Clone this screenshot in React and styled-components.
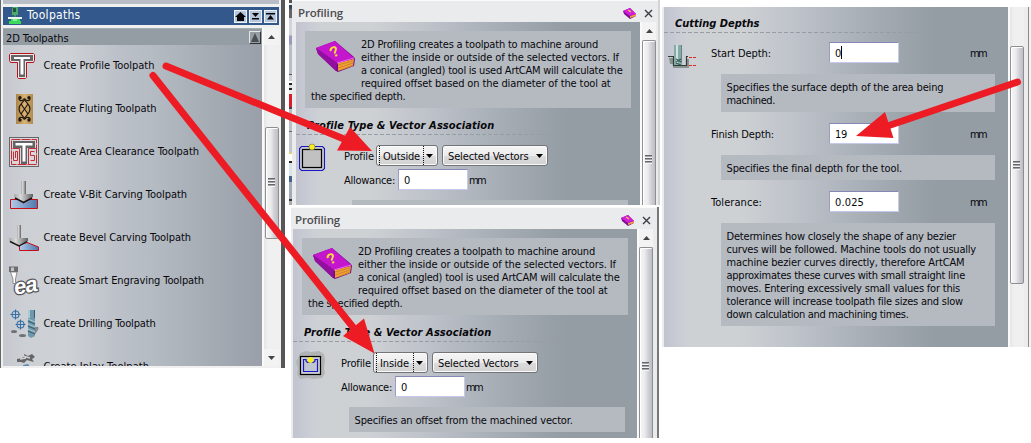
import React, { useLayoutEffect, useRef, useState } from "react";
import styled, { createGlobalStyle } from "styled-components";

const GlobalStyle = createGlobalStyle`
  * { box-sizing: border-box; }
  body {
    margin: 0;
    background: #fff;
    overflow: hidden;
    color: #08080c;
    font: 11px/13px "DejaVu Sans Condensed", "DejaVu Sans", sans-serif;
    font-stretch: condensed;
  }
  svg { display: block; flex: none; }
`;

/* ---------- text ---------- */

const FitSpan = styled.span`
  display: block;
  width: max-content;
  white-space: pre;
`;

/* One line of text whose tracking is adjusted to a given advance width. */
function Line({ w, children }) {
  const ref = useRef(null);
  const [spacing, setSpacing] = useState(0);
  useLayoutEffect(() => {
    const natural = ref.current.getBoundingClientRect().width;
    setSpacing((w - natural) / children.length);
  }, [w, children]);
  return (
    <FitSpan ref={ref} style={{ letterSpacing: spacing }}>
      {children}
    </FitSpan>
  );
}

/* ---------- shell ---------- */

const Page = styled.main`
  position: relative;
  display: flex;
  align-items: flex-start;
  width: 1031px;
  height: 443px;
  background: #fff;
  overflow: hidden;
`;

const Arrows = styled.svg`
  position: absolute;
  inset: 0;
  pointer-events: none;
`;

/* ---------- scrollbar ---------- */

const Track = styled.div`
  display: flex;
  flex-direction: column;
  align-items: center;
  flex: none;
  width: ${(p) => p.$width || 16}px;
  border-left: 2px solid #fafafa;
  background: linear-gradient(90deg, #e6e6e6, #f0f0f0 30%, #efefef);
`;

const ArrowCell = styled.div`
  display: flex;
  justify-content: center;
  align-items: center;
  height: ${(p) => p.$h}px;
  width: 100%;
  background: #f3f3f3;
`;

const TrackGap = styled.div`
  height: ${(p) => p.$h}px;
`;

const Thumb = styled.div`
  width: 14px;
  height: ${(p) => p.$h}px;
  padding-top: ${(p) => p.$grip}px;
  border: 1px solid #8f8f93;
  border-bottom-width: ${(p) => (p.$open ? 0 : 1)}px;
  border-radius: ${(p) => (p.$open ? "2px 2px 0 0" : "2px")};
  background: linear-gradient(90deg, #f6f6f6, #ebebed 40%, #cfcfd5 70%, #bdbdc4);
  box-shadow: inset 1px 1px 0 #fff;
`;

const Grip = styled.div`
  width: 7px;
  height: 9px;
  margin-left: 2px;
  background: repeating-linear-gradient(#66676b 0 1px, #a5a5aa 1px 2px, #f4f4f4 2px 3px);
`;

function Triangle({ down }) {
  return (
    <svg width="7" height="4" viewBox="0 0 7 4">
      <path d={down ? "M0 0H7L3.5 4Z" : "M0 4H7L3.5 0Z"} fill="#444" />
    </svg>
  );
}

/* ---------- toolpaths window ---------- */

const ToolWindow = styled.section`
  display: flex;
  width: 285px;
  height: 368px;
  border-left: 1px solid #66676b;
  border-right: 4px solid #575757;
  background: #f0f0f0;
  padding: 0 2px;
`;

const ToolColumn = styled.div`
  display: flex;
  flex-direction: column;
  width: 276px;
`;

const TopStrip = styled.div`
  height: 4px;
  margin-bottom: 3px;
  background: #b9bec6;
`;

const ToolTitle = styled.header`
  display: flex;
  align-items: center;
  height: 18px;
  padding: 0 2px 1px 5px;
  margin-bottom: 3px;
  background: #33588b;
  color: #fff;
  font-size: 12px;
`;

const TitleText = styled.div`
  flex: 1;
  padding-left: 5px;
`;

const TitleButton = styled.span`
  display: flex;
  align-items: center;
  justify-content: center;
  width: 13px;
  height: 13px;
  margin: 1px 0 0 2px;
  border: 1px solid #eef2f6;
  background: #b7c6da;
`;

const ToolBody = styled.div`
  display: flex;
  height: 338px;
`;

const ToolList = styled.div`
  width: 259px;
  overflow: hidden;
  background: linear-gradient(90deg, #c5c9d0, #cccfd3 20px, #ced1d5 65px, #bcc1c9 115px, #b5bbc3 150px, #a5acb4 205px, #9a9fa9 259px);
`;

const SectionHeader = styled.div`
  display: flex;
  align-items: center;
  justify-content: space-between;
  height: 17px;
  padding: 3px 1px 0 3px;
  border-top: 1px solid #a6acb3;
  background: #949ca4;
`;

const CollapseButton = styled.span`
  display: flex;
  align-items: center;
  justify-content: center;
  width: 12px;
  height: 13px;
  margin-top: -2px;
  border: 1px solid #e4e7ea;
  border-right-color: #333;
  border-bottom-color: #333;
  background: #959da5;
`;

const ToolItem = styled.div`
  display: flex;
  align-items: flex-start;
  gap: 4px;
  height: 43px;
  padding: 6px 0 0 6px;
`;

const ToolLabel = styled.div`
  padding: 8px 0 0 0.5px;
`;

function MachineIcon() {
  return (
    <svg width="14" height="17" viewBox="0 0 14 17">
      <path d="M5 0h5v8H8l-1 3L6 8H4V2Z" fill="#49aa69" />
      <path d="M5 1h3v4H5Z" fill="#25533d" />
      <path d="M0 10h14v2H0Z" fill="#e8f4ec" />
      <path d="M3 12h9v2h1v3H1v-3h2Z" fill="#39d95a" />
      <path d="M5 12h4v2H5Z" fill="#8cf0a0" />
    </svg>
  );
}

function ProfileToolIcon() {
  return (
    <svg width="30" height="30" viewBox="0 0 30 30">
      <path d="M1.5 2.5H24.5L25.5 3.5V9.5L24.5 11.5H17.5V26.5L16.5 27.500H9.5L8.5 26.500V11.5H1.5L.5 9.5V3.5Z" fill="#efe6e8" stroke="#b81219" />
      <path d="M2 4H24V10H16V26H10V10H2Z" fill="#646469" />
      <path d="M5 6H21V8H14.500V23.500H11.500V8H5Z" fill="#fff" />
    </svg>
  );
}

function FlutingIcon() {
  return (
    <svg width="30" height="30" viewBox="0 0 30 30">
      <defs>
        <linearGradient id="wood" x1="0" x2="1">
          <stop offset="0" stopColor="#a98349" />
          <stop offset=".5" stopColor="#d9b274" />
          <stop offset="1" stopColor="#b08a4d" />
        </linearGradient>
      </defs>
      <rect x="7" width="17" height="30" fill="url(#wood)" />
      <g fill="none" stroke="#20190f" strokeWidth="1.2">
        <path d="M11 4c-3 2 2 4 4 1 2 4 6 5 6 10s-4 6-6 10c-2-3-7-1-4 1" />
        <path d="M20 4c3 2-2 4-4 1-2 4-6 5-6 10s4 6 6 10c2-3 7-1 4 1" />
        <path d="m12 10 7 10M19 10l-7 10" />
      </g>
      <g fill="#20190f">
        <circle cx="11" cy="3.8" r="1.7" />
        <circle cx="20" cy="3.8" r="1.7" />
        <circle cx="11" cy="26" r="1.7" />
        <circle cx="20" cy="26" r="1.7" />
      </g>
    </svg>
  );
}

function AreaIcon() {
  return (
    <svg width="30" height="30" viewBox="0 0 30 30">
      <rect x=".5" y=".5" width="29" height="29" fill="#d9d7d9" stroke="#65656a" />
      <g fill="none" stroke="#c01a22" strokeWidth=".9">
        <rect x="2.5" y="2.5" width="25" height="25" strokeDasharray="9 1" />
        <path d="M10.500 11.500H3.500M10.500 11.500V27M19.500 11.500H27M19.500 11.500V27" />
        <path d="M4.500 14.500V23.500H8.500V14.500H6.500V21M25.500 14.500H21.500V18.500H25.500V23.500H21.500" />
      </g>
      <path d="M4 4H26V11H18V27H12V11H4Z" fill="#646469" />
      <path d="M6.500 6H23.500V8.500H16.500V24.500H13.500V8.500H6.500Z" fill="#fff" />
    </svg>
  );
}

function BlueDefs({ id }) {
  return (
    <defs>
      <linearGradient id={id} x1="0" y1="0" x2="1" y2="0">
        <stop offset="0" stopColor="#b4cbe8" />
        <stop offset="1" stopColor="#4c77ab" />
      </linearGradient>
      <linearGradient id={id + "s"} x1="0" x2="1">
        <stop offset="0" stopColor="#a9a9aa" />
        <stop offset=".35" stopColor="#d8d8d8" />
        <stop offset="1" stopColor="#606063" />
      </linearGradient>
    </defs>
  );
}

function VBitIcon() {
  return (
    <svg width="30" height="30" viewBox="0 0 30 30">
      <BlueDefs id="vb" />
      <path d="M1.500 19.500H9L14.500 23L20 19.500H28.500V28.500H1.500Z" fill="url(#vb)" stroke="#c50e18" />
      <rect x="12" y="1" width="5" height="13" fill="url(#vbs)" />
      <path d="M5 14H24V17L14.500 22.500L5 17Z" fill="url(#vbs)" />
      <path d="M6 18 14.500 22.500 23 18" fill="none" stroke="#161616" strokeWidth="1.500" />
    </svg>
  );
}

function BevelIcon() {
  return (
    <svg width="30" height="30" viewBox="0 0 30 30">
      <BlueDefs id="bv" />
      <path d="M10.500 22 18 19.500 29.500 24V27.500H10.500Z" fill="url(#bv)" stroke="#c50e18" />
      <rect x="8" y="2" width="4" height="13" fill="url(#bvs)" />
      <path d="M0 15H19V18L10 23L0 18Z" fill="url(#bvs)" />
      <path d="M1 18.500 10 23 18 18.500" fill="none" stroke="#161616" strokeWidth="1.400" />
    </svg>
  );
}

const IconGlyphs = styled.text`
  font: italic bold 22px "Liberation Sans", sans-serif;
  paint-order: stroke;
  fill: #fff;
  stroke: #55555a;
  stroke-width: 2.5px;
  letter-spacing: -1px;
`;

function EngravingIcon() {
  return (
    <svg width="30" height="30" viewBox="0 0 30 30" overflow="visible">
      <IconGlyphs x="5" y="27" transform="rotate(-10 15 20)">ea</IconGlyphs>
      <path d="M0 .5H9V6H0Z" fill="#6d6d70" />
      <path d="M1.500 6H8L6.500 13V17.500H4V13Z" fill="#fff" stroke="#77777a" strokeWidth=".8" />
      <path d="M2 1.500H5V5H2Z" fill="#c5c5c7" />
    </svg>
  );
}

function DrillingIcon() {
  return (
    <svg width="30" height="30" viewBox="0 0 30 30">
      <path d="M26 18q5-1 3 3l-5 7h-3Z" fill="#85888c" />
      <g fill="none" stroke="#3570a8" strokeWidth="1.100">
        <circle cx="6.500" cy="5.500" r="3.500" />
        <path d="M1.500 5.500H11.500M6.500 .5V10.500" />
        <circle cx="11.500" cy="15.500" r="3.500" />
        <path d="M6.500 15.500H16.500M11.500 10.500V20.500" />
      </g>
      <ellipse cx="5" cy="22.500" rx="3" ry="1.500" fill="#707174" />
      <ellipse cx="13.500" cy="26.500" rx="3.500" ry="1.500" fill="#707174" />
      <path d="M19 1H26V27L22 29L19 27Z" fill="#6e99ac" />
      <path d="M19 1H21V9H19Z" fill="#a9cbd6" />
      <path d="M25 1H26V9H25Z" fill="#375b6e" />
      <path d="m19 12 7 3M19 17l7 3M19 22l7 3" stroke="#3d6070" strokeWidth="1.300" />
      <path d="m19 10 7 3M19 15l7 3M19 20l7 3" stroke="#a5c8d2" />
    </svg>
  );
}

function InlayIcon() {
  return (
    <svg width="30" height="30" viewBox="0 0 30 30">
      <path d="m15 2 4 2 4-2 3 3-3 2 2 3-4-1-3-1-3 3-3-1-4 0 0-3 5-1 2-2Z" fill="#646568" />
      <path d="m14 4 7 2M11 7l6-1" stroke="#d1d2d4" strokeWidth="1.500" />
      <path d="m14 13 5-1 2 3-6 2Z" fill="#5f86b4" />
    </svg>
  );
}

const tools = [
  ["Create Profile Toolpath", 111, ProfileToolIcon],
  ["Create Fluting Toolpath", 113, FlutingIcon],
  ["Create Area Clearance Toolpath", 155.5, AreaIcon],
  ["Create V-Bit Carving Toolpath", 143.5, VBitIcon],
  ["Create Bevel Carving Toolpath", 147.5, BevelIcon],
  ["Create Smart Engraving Toolpath", 160.5, EngravingIcon],
  ["Create Drilling Toolpath", 112, DrillingIcon],
  ["Create Inlay Toolpath", 105.5, InlayIcon],
];

function Toolpaths() {
  return (
    <ToolWindow>
      <ToolColumn>
        <TopStrip />
        <ToolTitle>
          <MachineIcon />
          <TitleText><Line w={53.5}>Toolpaths</Line></TitleText>
          <TitleButton>
            <svg width="11" height="9" viewBox="0 0 11 9"><path d="M5.500 0 11 5H9V9H2V5H0Z" fill="#05070a" /></svg>
          </TitleButton>
          <TitleButton>
            <svg width="9" height="7" viewBox="0 0 9 7"><path d="M1 0H8L4.500 4ZM1 5H8V6.500H1Z" fill="#05070a" /></svg>
          </TitleButton>
          <TitleButton>
            <svg width="9" height="7" viewBox="0 0 9 7"><path d="M0 0H9V1.500H0ZM1 6.500H8L4.500 2Z" fill="#05070a" /></svg>
          </TitleButton>
        </ToolTitle>
        <ToolBody>
          <ToolList>
            <SectionHeader>
              <Line w={62.5}>2D Toolpaths</Line>
              <CollapseButton>
                <svg width="8" height="9" viewBox="0 0 8 9"><path d="M4 0 8 9H0Z" fill="#4b4e52" /></svg>
              </CollapseButton>
            </SectionHeader>
            {tools.map(([label, w, Icon]) => (
              <ToolItem key={label}>
                <Icon />
                <ToolLabel><Line w={w}>{label}</Line></ToolLabel>
              </ToolItem>
            ))}
          </ToolList>
          <Track $width={17}>
            <ArrowCell $h={17}><Triangle /></ArrowCell>
            <TrackGap $h={82} />
            <Thumb $h={112} $grip={50}><Grip /></Thumb>
            <TrackGap $h={110} />
            <ArrowCell $h={17}><Triangle down /></ArrowCell>
          </Track>
        </ToolBody>
      </ToolColumn>
    </ToolWindow>
  );
}

/* ---------- shared form parts ---------- */

const FormArea = styled.div`
  width: 344px;
  overflow: hidden;
  background: linear-gradient(90deg, #c1c4ce, #c9ccd4 14px, #ced1d4 26px, #ced1d4 75px, #c0c4cb 125px, #b4b9c1 165px, #a6adb5 205px, #969ea6 262px, #949ca4 275px);
`;

const Note = styled.div`
  width: ${(p) => p.$w}px;
  min-height: 25px;
  margin-left: ${(p) => p.$left || 0}px;
  padding: 7px 5px 5px ${(p) => p.$pad || 5.5}px;
  background: #b5bac1;
`;

const Heading = styled.h2`
  height: ${(p) => p.$h}px;
  margin: 0;
  padding: ${(p) => p.$top}px 0 0 11px;
  font-size: 11px;
  font-weight: bold;
  font-style: italic;
  line-height: 13px;
  letter-spacing: 0;
`;

const DashRule = styled.div`
  width: 270px;
  height: 1px;
  background: repeating-linear-gradient(90deg, #969da5 0 4px, transparent 4px 6px);
`;

const Field = styled.div`
  display: flex;
  align-items: center;
  width: 70px;
  height: 21px;
  padding: 2px 0 0 5px;
  border: 1px solid #c6c9ec;
  border-top-color: #8587b5;
  border-left-color: #9c9dc7;
  background: #fff;
`;

const Caret = styled.i`
  width: 1px;
  height: 13px;
  margin-top: -2px;
  background: #000;
`;

const Label = styled.label`
  width: ${(p) => p.$w}px;
  padding-top: 2px;
`;

const Unit = styled.span`
  padding: 2px 0 0 ${(p) => p.$left || 0}px;
`;

/* ---------- profiling windows ---------- */

const Middle = styled.div`
  width: 371px;
  margin-left: 4px;
`;

const TopRow = styled.div`
  display: flex;
  height: 205px;
  margin-bottom: 2px;
`;

const Backdrop = styled.div`
  width: 3px;
  background: linear-gradient(#555 0 3px, #eee 3px 5px, #345 5px 8px, #666 10px 18px, #d1d4da 18px 35px, #9999bf 36px 44px, #b8bdc8 45px 74px, #555 74px 75px, #c9ccd2 75px 81px, #fff 81px 83px, #222 83px 85px, #ddd 85px 88px, #222 88px 90px, #eee 90px 94px, #d81c2c 94px 107px, #444 107px 109px, #babfc7 109px 131px, #666 131px 132px, #c2c5cb 132px 152px, #d6cf85 152px 154px, #fff 154px 161px, #222 161px 163px, #d9e2ea 163px 176px, #44628a 176px 182px, #a3aab8 182px 199px, #333 199px 201px, #aaa 201px);
`;

const ProfileWindow = styled.section`
  width: 368px;
  height: ${(p) => p.$h}px;
  margin-left: ${(p) => p.$left || 0}px;
  padding-left: ${(p) => (p.$second ? 2 : 4)}px;
  border-right: 2px solid ${(p) => (p.$second ? "#77797c" : "#d3d4d6")};
  background: #eaebec;
  box-shadow: inset 0 1px 0 #fafafa;
`;

const ProfileTitle = styled.header`
  display: flex;
  align-items: center;
  height: 22px;
  padding: 4px 4px 0 2px;
  color: #4c4d50;
  font: 600 11.5px/14px "Open Sans", sans-serif;
`;

const TitleActions = styled.div`
  display: flex;
  align-items: center;
  gap: 7px;
  margin-left: auto;
  padding-right: ${(p) => (p.$second ? 2 : 1)}px;
`;

const ProfileBody = styled.div`
  display: flex;
  height: ${(p) => p.$h}px;
`;

const Intro = styled.div`
  padding: 9px 9px 0;
`;

const BookFloat = styled.div`
  float: left;
  width: 50px;
  height: 50px;
  padding: 3px 0 0 5px;
`;

const FormRow = styled.div`
  display: flex;
  padding-top: 10px;
`;

const IconCell = styled.div`
  width: 48px;
  margin-top: -2px;
  padding-left: 3px;
`;

const Controls = styled.div`
  display: flex;
  align-items: center;
  height: 21px;
  margin-bottom: 3px;
`;

const Dropdown = styled.button`
  display: flex;
  align-items: center;
  justify-content: space-between;
  width: ${(p) => p.$w}px;
  height: 21px;
  margin: 0 4px 0 0;
  padding: 0 4px 0 ${(p) => (p.$focus ? 2 : 5)}px;
  border: 1px solid #727478;
  border-radius: 3px;
  background: linear-gradient(#f5f5f5, #ececec 50%, #dcdcdc 51%, #d2d2d2);
  box-shadow: inset 0 0 0 1px #fafafa;
  color: inherit;
  font: inherit;
`;

const DropText = styled.span`
  display: flex;
  align-items: center;
  height: 19px;
  padding-top: 2px;
`;

const FocusText = styled(DropText)`
  width: ${(p) => p.$w}px;
  padding-left: 3px;
  border: 1px dotted #111;
  border-width: 0 1px;
`;

function Chevron() {
  return (
    <svg width="7" height="4" viewBox="0 0 7 4"><path d="M0 0H7L3.500 4Z" fill="#000" /></svg>
  );
}

const BookMark = styled.text`
  font: bold 15px "Liberation Sans", sans-serif;
  fill: #f8df35;
`;

function BookIcon() {
  return (
    <svg width="40" height="32" viewBox="0 0 40 32">
      <path d="M0 7 19 0 38 16 39 18 38 25 22 31 20 30 2 13Z" fill="#790a87" />
      <path d="M22 22 38 18 37 25 22 30Z" fill="#f0a036" />
      <path d="m22 24 15-4M22 27l15-5M25 29l12-5" stroke="#b8701d" strokeWidth=".6" />
      <path d="M0 7 19 0 38 17 21 22Z" fill="#c316cd" />
      <path d="M0 7 21 22 20 30 2 13Z" fill="#93109f" />
      <path d="M21 22 38 17" stroke="#f16bf4" />
      <BookMark x="14" y="16" transform="rotate(-28 18 11)">?</BookMark>
    </svg>
  );
}

function SmallBook() {
  return (
    <svg width="14" height="11" viewBox="0 0 14 11">
      <path d="M0 3 7 0 13 6V8L7 11 1 6Z" fill="#7e108c" />
      <path d="M7 8 13 6V8L7 10Z" fill="#eba33c" />
      <path d="M0 3 7 0 13 6 7 8Z" fill="#d31cdc" />
      <path d="m5 2 3 2" stroke="#f5cc38" strokeWidth="1.300" />
    </svg>
  );
}

function OutsideIcon() {
  return (
    <svg width="27" height="30" viewBox="0 0 27 30">
      <path d="M3.500 3.500H23.500L25.500 5.500V25.500L23.500 27.500H2.500L.5 25.500V5.500L2.500 3.500Z" fill="#c5c6ca" stroke="#1717c5" strokeWidth="1.100" />
      <rect x="3.500" y="6.500" width="19" height="18" fill="#c1c1c1" stroke="#000" strokeWidth="1.200" />
      <circle cx="13" cy="4" r="3" fill="#f6ef20" stroke="#77712e" strokeWidth=".6" />
    </svg>
  );
}

function InsideIcon() {
  return (
    <svg width="30" height="30" viewBox="0 0 30 30">
      <path d="M4 3 10 1 15 2 23 1 28 4 29 10 28 18 29 23 26 28 18 29 11 28 4 29 1 24 2 18 0 12 2 8Z" fill="#b2b3b4" />
      <rect x="4.500" y="6.500" width="20" height="18" fill="#cbcccf" stroke="#000" strokeWidth="1.200" />
      <path d="M7.500 9.500H10V11L11.500 12.500H17.500L19 11V9.500H21.500V21.500H7.500Z" fill="#c0c5d2" stroke="#1717c5" strokeWidth="1.200" />
      <circle cx="14.500" cy="10" r="2.900" fill="#f6ef20" />
    </svg>
  );
}

function Profiling({ second, mode, modeWidth, dropWidth, h, left, note }) {
  return (
    <ProfileWindow $second={second} $h={h} $left={left}>
      <ProfileTitle>
        <Line w={45}>Profiling</Line>
        <TitleActions $second={second}>
          <SmallBook />
          <svg width="9" height="9" viewBox="0 0 9 9"><path d="m1 1 7 7M8 1 1 8" stroke="#3c3d40" strokeWidth="1.400" /></svg>
        </TitleActions>
      </ProfileTitle>
      <ProfileBody $h={h - 22}>
        <FormArea>
          <Intro>
            <Note $w={326} $pad={6}>
              <BookFloat><BookIcon /></BookFloat>
              <Line w={237}>2D Profiling creates a toolpath to machine around</Line>
              <Line w={258}>either the inside or outside of the selected vectors. If</Line>
              <Line w={261.5}>a conical (angled) tool is used ArtCAM will calculate the</Line>
              <Line w={249.5}>required offset based on the diameter of the tool at</Line>
              <Line w={94.5}>the specified depth.</Line>
            </Note>
          </Intro>
          <Heading $h={26} $top={11}><Line w={187.5}>Profile Type &amp; Vector Association</Line></Heading>
          <DashRule />
          <FormRow>
            <IconCell>{second ? <InsideIcon /> : <OutsideIcon />}</IconCell>
            <div>
              <Controls>
                <Label $w={32}><Line w={30}>Profile</Line></Label>
                <Dropdown $w={dropWidth} $focus>
                  <FocusText $w={dropWidth - 17}><Line w={modeWidth}>{mode}</Line></FocusText>
                  <Chevron />
                </Dropdown>
                <Dropdown $w={106}>
                  <DropText><Line w={80.5}>Selected Vectors</Line></DropText>
                  <Chevron />
                </Dropdown>
              </Controls>
              <Controls>
                <Label $w={54}><Line w={51}>Allowance:</Line></Label>
                <Field>0</Field>
                <Unit $left={1}><Line w={16}>mm</Line></Unit>
              </Controls>
              <TrackGap $h={7} />
              <Note $w={276} $left={8}>{note && <Line w={218}>{note}</Line>}</Note>
            </div>
          </FormRow>
        </FormArea>
        <Track>
          <ArrowCell $h={18}><Triangle /></ArrowCell>
          <Thumb $h={second ? 191 : 165} $grip={114} $open><Grip /></Thumb>
        </Track>
      </ProfileBody>
    </ProfileWindow>
  );
}

/* ---------- cutting depths ---------- */

const DepthWindow = styled.section`
  display: flex;
  width: 369px;
  height: 340px;
  margin: 7px 0 0 2px;
  padding-left: 2px;
  background: linear-gradient(90deg, #ececec 366px, #88898c 366px 367px, #f2f2f2 367px);
`;

const DepthColumns = styled.div`
  display: flex;
`;

const DepthIconCell = styled.div`
  width: 47px;
  padding: 12px 0 0 4px;
`;

const DepthRow = styled.div`
  display: flex;
  align-items: center;
  height: 21px;
  margin: ${(p) => p.$top}px 0 11px;
`;

const DepthField = styled.div`
  display: flex;
  width: 141px;
`;

function DepthIcon() {
  return (
    <svg width="30" height="25" viewBox="0 0 30 25">
      <path d="M1 13H6V21H19V14H21V23H5V19H2Z" fill="#899390" />
      <path d="M0 11.500H5.500V20.500H18.500V11.500H20" fill="none" stroke="#333b39" strokeWidth="1.200" />
      <rect x="6" width="8" height="20" fill="#86aaa5" />
      <path d="M8 0h2v18H8Z" fill="#cfe4e0" />
      <path d="M13.500 0V18" stroke="#6b8481" />
      <path d="m8 14 5 3M13 14l-5 3M8 18l5 2" stroke="#315b59" strokeWidth="1.200" />
      <path d="M21 12.500H29M21 20.500H29" stroke="#de2a20" strokeWidth="1.100" strokeDasharray="3 1" />
    </svg>
  );
}

const depthFields = [
  { label: "Start Depth:", w: 60, value: "0", vw: 6, caret: true, top: 9, lines: [["Specifies the surface depth of the area being", 217], ["machined.", 48.5]] },
  { label: "Finish Depth:", w: 63, value: "19", vw: 12, top: 11, lines: [["Specifies the final depth for the tool.", 175.5]] },
  {
    label: "Tolerance:", w: 51, value: "0.025", vw: 29, top: 11,
    lines: [
      ["Determines how closely the shape of any bezier", 229.5],
      ["curves will be followed. Machine tools do not usually", 249.5],
      ["machine bezier curves directly, therefore ArtCAM", 238],
      ["approximates these curves with small straight line", 238.5],
      ["moves. Entering excessively small values for this", 233.5],
      ["tolerance will increase toolpath file sizes and slow", 236.5],
      ["down calculation and machining times.", 182],
    ],
  },
];

function CuttingDepths() {
  return (
    <DepthWindow>
      <FormArea>
        <Heading $h={25} $top={10}><Line w={84.5}>Cutting Depths</Line></Heading>
        <DashRule />
        <DepthColumns>
          <DepthIconCell><DepthIcon /></DepthIconCell>
          <div>
            {depthFields.map((f) => (
              <React.Fragment key={f.label}>
                <DepthRow $top={f.top}>
                  <Label $w={118}><Line w={f.w}>{f.label}</Line></Label>
                  <DepthField>
                    <Field><Line w={f.vw}>{f.value}</Line>{f.caret && <Caret />}</Field>
                  </DepthField>
                  <Unit><Line w={16}>mm</Line></Unit>
                </DepthRow>
                <Note $w={274} $left={10}>
                  {f.lines.map(([text, w]) => <Line key={text} w={w}>{text}</Line>)}
                </Note>
              </React.Fragment>
            ))}
          </div>
        </DepthColumns>
      </FormArea>
      <Track>
        <TrackGap $h={39} />
        <Thumb $h={238} $grip={114}><Grip /></Thumb>
      </Track>
    </DepthWindow>
  );
}

export default function App() {
  return (
    <Page>
      <GlobalStyle />
      <Toolpaths />
      <Middle>
        <TopRow>
          <Backdrop />
          <Profiling mode="Outside" modeWidth={37} dropWidth={62} h={205} />
        </TopRow>
        <Profiling
          second
          mode="Inside"
          modeWidth={29}
          dropWidth={55}
          h={231}
          left={2}
          note="Specifies an offset from the machined vector."
        />
      </Middle>
      <CuttingDepths />
      <Arrows width="1031" height="443" viewBox="0 0 1031 443">
        <g stroke="#ed1c24" strokeWidth="7" strokeLinecap="round">
          <path d="M166 66 344 139" />
          <path d="M153 75.500 356 331" />
          <path d="M1017.500 82 889 125.500" />
        </g>
        <g fill="#ed1c24">
          <path d="M372 151 350 127 337 150.500Z" />
          <path d="M374.500 353.500 364 318.500 343 336Z" />
          <path d="M856 136 885 112 893.500 138Z" />
        </g>
      </Arrows>
    </Page>
  );
}
